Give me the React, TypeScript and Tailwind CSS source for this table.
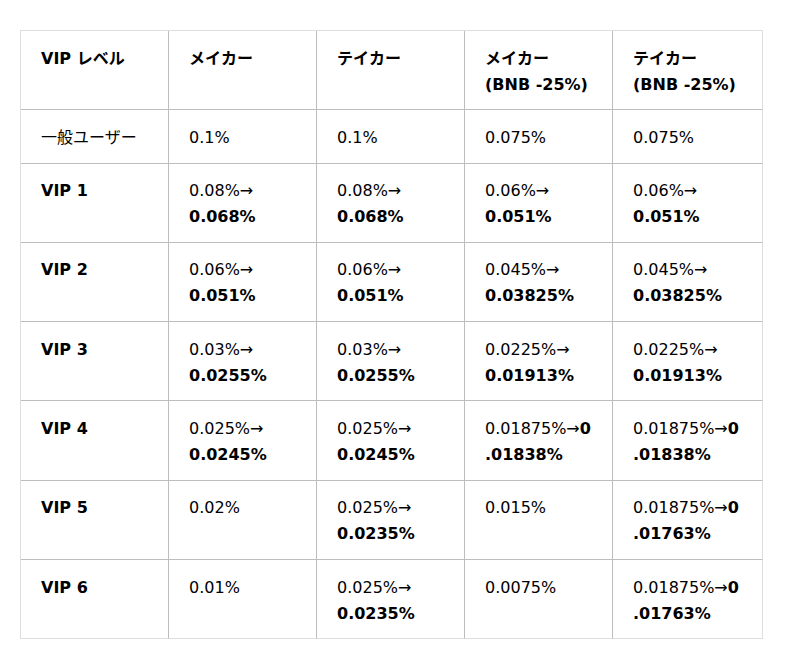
import type { ReactNode } from "react";

type Cell = ReactNode;

const cellBase = "border-r border-b border-[#bdbdbd] px-5 pt-[14.5px] pb-[11.8px] text-left align-top";

// "a→" on first line, bold "b" on the second
function drop(a: string, b: string): Cell {
  return (
    <>
      <span className="block">{a}</span>
      <b className="block font-bold">{b}</b>
    </>
  );
}

// long value that wraps inside the bold part
function split(a: string, b1: string, b2: string): Cell {
  return (
    <>
      <span className="block">
        {a}
        <b className="font-bold">{b1}</b>
      </span>
      <b className="block font-bold">{b2}</b>
    </>
  );
}

const header: Cell[] = [
  "VIP レベル",
  "メイカー",
  "テイカー",
  <>
    メイカー
    <br />
    (BNB -25%)
  </>,
  <>
    テイカー
    <br />
    (BNB -25%)
  </>,
];

const rows: { level: string; bold: boolean; cells: Cell[] }[] = [
  { level: "一般ユーザー", bold: false, cells: ["0.1%", "0.1%", "0.075%", "0.075%"] },
  {
    level: "VIP 1",
    bold: true,
    cells: [drop("0.08%→", "0.068%"), drop("0.08%→", "0.068%"), drop("0.06%→", "0.051%"), drop("0.06%→", "0.051%")],
  },
  {
    level: "VIP 2",
    bold: true,
    cells: [drop("0.06%→", "0.051%"), drop("0.06%→", "0.051%"), drop("0.045%→", "0.03825%"), drop("0.045%→", "0.03825%")],
  },
  {
    level: "VIP 3",
    bold: true,
    cells: [drop("0.03%→", "0.0255%"), drop("0.03%→", "0.0255%"), drop("0.0225%→", "0.01913%"), drop("0.0225%→", "0.01913%")],
  },
  {
    level: "VIP 4",
    bold: true,
    cells: [
      drop("0.025%→", "0.0245%"),
      drop("0.025%→", "0.0245%"),
      split("0.01875%→", "0", ".01838%"),
      split("0.01875%→", "0", ".01838%"),
    ],
  },
  {
    level: "VIP 5",
    bold: true,
    cells: ["0.02%", drop("0.025%→", "0.0235%"), "0.015%", split("0.01875%→", "0", ".01763%")],
  },
  {
    level: "VIP 6",
    bold: true,
    cells: ["0.01%", drop("0.025%→", "0.0235%"), "0.0075%", split("0.01875%→", "0", ".01763%")],
  },
];

export default function App() {
  return (
    <div
      className="min-h-[668px] bg-white px-5 pt-[30px] text-[16px] leading-[26px] text-black"
      style={{ fontFamily: '"DejaVu Sans", "Noto Sans CJK JP", sans-serif' }}
    >
      <table className="w-[742px] table-fixed border-separate border-spacing-0 border-l border-t border-[#dedede]">
        <colgroup>
          <col className="w-[148px]" />
          <col className="w-[148px]" />
          <col className="w-[148px]" />
          <col className="w-[148px]" />
          <col className="w-[150px]" />
        </colgroup>
        <thead>
          <tr>
            {header.map((h, i) => (
              <th key={i} className={`${cellBase} font-bold ${i === 4 ? "border-r-[#dedede]" : ""}`}>
                {h}
              </th>
            ))}
          </tr>
        </thead>
        <tbody>
          {rows.map((r, ri) => {
            const last = ri === rows.length - 1;
            return (
              <tr key={r.level}>
                <td
                  className={`${cellBase} ${r.bold ? "font-bold" : "font-normal"} ${last ? "border-b-[#dedede]" : ""}`}
                >
                  {r.level}
                </td>
                {r.cells.map((c, ci) => (
                  <td
                    key={ci}
                    className={`${cellBase} font-normal ${ci === 3 ? "border-r-[#dedede]" : ""} ${
                      last ? "border-b-[#dedede]" : ""
                    }`}
                  >
                    {c}
                  </td>
                ))}
              </tr>
            );
          })}
        </tbody>
      </table>
    </div>
  );
}
